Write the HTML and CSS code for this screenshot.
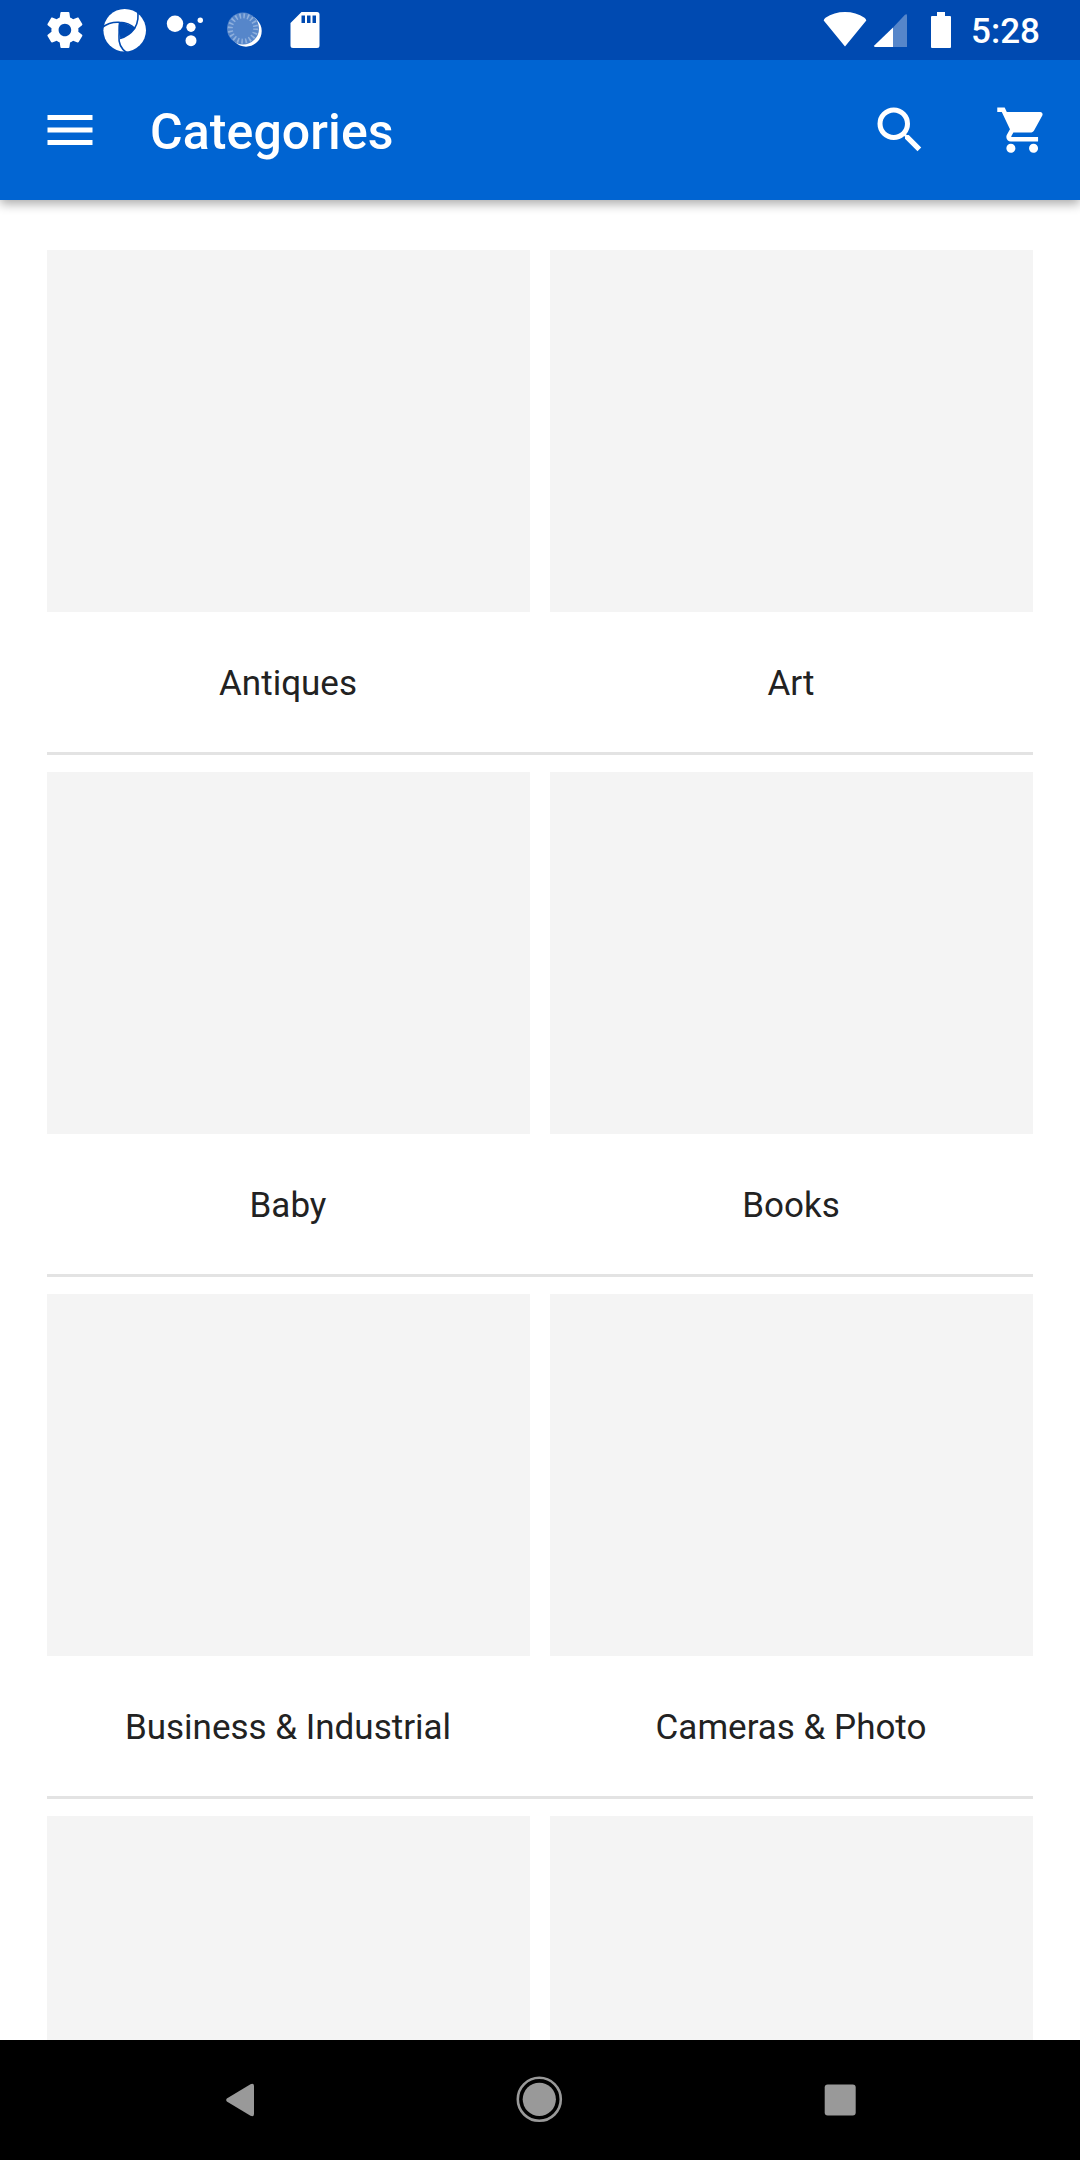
FILE: index.html
```
<!DOCTYPE html>
<html lang="en">
<head>
<meta charset="utf-8">
<title>Categories</title>
<link rel="stylesheet" href="styles.css">
</head>
<body>
<div class="screen">
  <div class="status">
    <svg class="status-left" width="300" height="60" viewBox="30 0 300 60" fill="#fff">
      <path transform="translate(43.3 8.4) scale(1.8)" d="M19.43 12.98c.04-.32.07-.64.07-.98s-.03-.66-.07-.98l2.11-1.65c.19-.15.24-.42.12-.64l-2-3.46c-.12-.22-.39-.3-.61-.22l-2.49 1c-.52-.4-1.08-.73-1.69-.98l-.38-2.65C14.46 2.18 14.25 2 14 2h-4c-.25 0-.46.18-.49.42l-.38 2.65c-.61.25-1.17.59-1.69.98l-2.49-1c-.23-.09-.49 0-.61.22l-2 3.46c-.13.22-.07.49.12.64l2.11 1.65c-.04.32-.07.65-.07.98s.03.66.07.98l-2.11 1.65c-.19.15-.24.42-.12.64l2 3.46c.12.22.39.3.61.22l2.49-1c.52.4 1.08.73 1.69.98l.38 2.65c.03.24.24.42.49.42h4c.25 0 .46-.18.49-.42l.38-2.65c.61-.25 1.17-.59 1.69-.98l2.49 1c.23.09.49 0 .61-.22l2-3.46c.12-.22.07-.49-.12-.64l-2.11-1.65zM12 15.5c-1.93 0-3.5-1.57-3.5-3.5s1.57-3.5 3.5-3.5 3.5 1.57 3.5 3.5-1.57 3.5-3.5 3.5z"/>
      <circle cx="124.7" cy="30.3" r="21.3"/>
      <g fill="none" stroke="#004ab1" stroke-width="1.6">
        <path d="M102 27.500Q110 21.500 119.500 22.300Q129 22.500 135 28.500"/>
        <path d="M137 8Q140 20 134.500 28.500Q129 36 120 38.500"/>
        <path d="M127 53Q118 47 119 36L119.500 22.300"/>
      </g>
      <path fill="#004ab1" d="M119.300 22Q128 23 135 28.500Q128 36 120.500 38.500Q117.500 30 119.300 22Z"/>
      <circle cx="175" cy="23.700" r="8.200"/><circle cx="191" cy="27.300" r="4.600"/><circle cx="191" cy="40.700" r="5.500"/><circle cx="200.300" cy="20.200" r="2.700"/>
      <circle cx="246" cy="31" r="15.700"/>
      <circle cx="243" cy="28.500" r="16" fill="#5686ca"/>
      <circle cx="243" cy="28.500" r="12.700" fill="none" stroke="#8fb0dd" stroke-width="5" stroke-dasharray="1.600 2.390"/>
      <path d="M301.500 12H317Q319.500 12 319.500 14.500V45.500Q319.500 48 317 48H293Q290.500 48 290.500 45.500V23ZM301.500 15.500V23H305V15.500ZM307 15.500V23H310.500V15.500ZM312.500 15.500V23H316V15.500Z" fill-rule="evenodd"/>
    </svg>
    <div class="status-right">
      <svg width="150" height="60" viewBox="815 0 150 60" fill="#fff">
        <path d="M845 46.500L823.700 20.500Q824 18.800 825.500 17.800Q834 12 845 12T864.500 17.800Q866 18.800 866.300 20.500Z"/>
        <path d="M893 27.500V47H875Q873.500 46.500 874.300 45.500Z"/>
        <path fill="#5686ca" d="M893 27.500L905 14.700Q907 13.500 907 15.500V47H893Z"/>
        <path d="M937 12H945V16H950Q951 16 951 17V47Q951 48 950 48H932Q931 48 931 47V17Q931 16 932 16H937Z"/>
      </svg>
      <span class="clock">5:28</span>
    </div>
  </div>
  <header class="appbar">
    <svg width="60" height="60" viewBox="0 0 24 24" fill="#fff"><path d="M3 18h18v-2H3v2zm0-5h18v-2H3v2zm0-7v2h18V6H3z"/></svg>
    <h1 class="title">Categories</h1>
    <svg class="search" width="60" height="60" viewBox="0 0 24 24" fill="#fff"><path d="M15.500 14h-.79l-.28-.27A6.471 6.471 0 0 0 16 9.500 6.500 6.500 0 1 0 9.500 16c1.610 0 3.090-.59 4.230-1.570l.27.28v.79l5 4.990L20.490 19l-4.990-5zm-6 0C7.010 14 5 11.990 5 9.500S7.010 5 9.500 5 14 7.010 14 9.500 11.990 14 9.500 14z"/></svg>
    <svg class="cart" width="54.400" height="54.400" viewBox="0 0 24 24" fill="#fff"><path d="M7 18c-1.100 0-1.990.9-1.990 2S5.900 22 7 22s2-.9 2-2-.9-2-2-2zM1 2v2h2l3.600 7.590-1.350 2.450c-.16.28-.25.61-.25.960 0 1.100.9 2 2 2h12v-2H7.420c-.14 0-.25-.11-.25-.25l.03-.12.9-1.630h7.450c.75 0 1.410-.41 1.750-1.030l3.580-6.490c.08-.14.12-.31.12-.48 0-.55-.45-1-1-1H5.210l-.94-2H1zm16 16c-1.100 0-1.990.9-1.990 2s.89 2 1.990 2 2-.9 2-2-.9-2-2-2z"/></svg>
  </header>
  <main class="list">
    <section class="row">
      <div class="card"><div class="thumb"></div><div class="label">Antiques</div></div>
      <div class="card"><div class="thumb"></div><div class="label">Art</div></div>
    </section>
    <section class="row">
      <div class="card"><div class="thumb"></div><div class="label">Baby</div></div>
      <div class="card"><div class="thumb"></div><div class="label">Books</div></div>
    </section>
    <section class="row">
      <div class="card"><div class="thumb"></div><div class="label">Business &amp; Industrial</div></div>
      <div class="card"><div class="thumb"></div><div class="label">Cameras &amp; Photo</div></div>
    </section>
    <section class="row">
      <div class="card"><div class="thumb"></div></div>
      <div class="card"><div class="thumb"></div></div>
    </section>
  </main>
  <nav class="navbar">
    <svg width="60" height="60" viewBox="210 2070 60 60" fill="#999"><path d="M226.800 2098.500L250.500 2084.200Q254 2082.800 254 2086V2114Q254 2117.200 250.500 2115.800L226.800 2101.500Q225.300 2100 226.800 2098.500Z"/></svg>
    <svg width="60" height="60" viewBox="510 2070 60 60" fill="#999"><circle cx="539.300" cy="2099.300" r="16.600"/><circle cx="539.300" cy="2099.300" r="21.500" fill="none" stroke="#999" stroke-width="2.600"/></svg>
    <svg width="60" height="60" viewBox="810 2070 60 60" fill="#999"><rect x="824.700" y="2084.500" width="31" height="31" rx="3"/></svg>
  </nav>
</div>
</body>
</html>
```
FILE: styles.css
```
* { box-sizing: border-box; margin: 0; }
body { background: #fff; font-family: Roboto, sans-serif; }
svg { display: block; flex: none; }
.screen { width: 1080px; height: 2160px; display: flex; flex-direction: column; overflow: hidden; }
.status { height: 60px; flex: none; background: #004ab1; color: #fff; display: flex; justify-content: space-between; padding: 0 40px 0 30px; z-index: 2; }
.status-right { display: flex; align-items: center; gap: 6px; }
.clock { font-size: 35px; font-weight: 500; line-height: 60px; padding-top: 3px; }
.appbar { height: 140px; flex: none; background: #0064d2; color: #fff; display: flex; align-items: center; padding: 0 30.600px 0 40px; box-shadow: 0 4px 10px rgba(0, 0, 0, .33); z-index: 1; }
.title { font-size: 50px; font-weight: 500; line-height: 60px; letter-spacing: .1px; margin-left: 50px; padding-top: 3px; flex: 1; }
.cart { margin-left: 65px; }
.list { flex: 1; min-height: 0; overflow: hidden; padding: 50px 47px 0; display: flex; flex-direction: column; gap: 17px; }
.row { display: grid; grid-template-columns: 1fr 1fr; column-gap: 20px; flex: none; border-bottom: 3px solid #e3e3e3; }
.thumb { height: 362px; background: #f4f4f4; }
.label { height: 140px; line-height: 140px; padding: 2px 1px 0 0; text-align: center; font-size: 35px; color: #222; }
.navbar { height: 120px; flex: none; background: #000; display: flex; align-items: center; justify-content: space-between; padding: 0 210px; }
```
